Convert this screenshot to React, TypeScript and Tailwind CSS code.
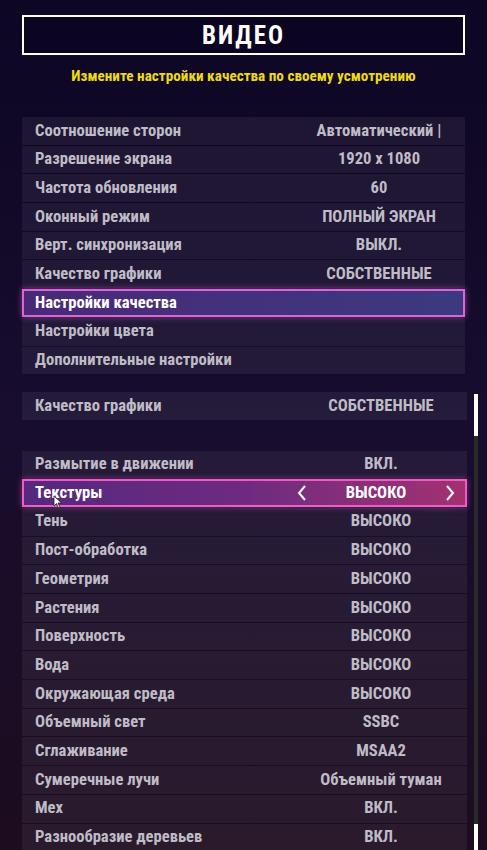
import React from 'react';

type Row = { label: string; value?: string; active?: boolean; blank?: boolean };

const topRows: Row[] = [
  { label: 'Соотношение сторон', value: 'Автоматический |' },
  { label: 'Разрешение экрана', value: '1920 x 1080' },
  { label: 'Частота обновления', value: '60' },
  { label: 'Оконный режим', value: 'ПОЛНЫЙ ЭКРАН' },
  { label: 'Верт. синхронизация', value: 'ВЫКЛ.' },
  { label: 'Качество графики', value: 'СОБСТВЕННЫЕ' },
  { label: 'Настройки качества', active: true },
  { label: 'Настройки цвета' },
  { label: 'Дополнительные настройки' },
];

const qualityRows: Row[] = [
  { label: 'Качество графики', value: 'СОБСТВЕННЫЕ' },
  { label: '', blank: true },
  { label: 'Размытие в движении', value: 'ВКЛ.' },
  { label: 'Текстуры', value: 'ВЫСОКО', active: true },
  { label: 'Тень', value: 'ВЫСОКО' },
  { label: 'Пост-обработка', value: 'ВЫСОКО' },
  { label: 'Геометрия', value: 'ВЫСОКО' },
  { label: 'Растения', value: 'ВЫСОКО' },
  { label: 'Поверхность', value: 'ВЫСОКО' },
  { label: 'Вода', value: 'ВЫСОКО' },
  { label: 'Окружающая среда', value: 'ВЫСОКО' },
  { label: 'Объемный свет', value: 'SSBC' },
  { label: 'Сглаживание', value: 'MSAA2' },
  { label: 'Сумеречные лучи', value: 'Объемный туман' },
  { label: 'Мех', value: 'ВКЛ.' },
  { label: 'Разнообразие деревьев', value: 'ВКЛ.' },
];

const Chevron: React.FC<{ dir: 'left' | 'right' }> = ({ dir }) => (
  <svg width="10" height="16" viewBox="0 0 10 16" fill="none">
    <polyline
      points={dir === 'left' ? '8,1 2,8 8,15' : '2,1 8,8 2,15'}
      stroke="white"
      strokeWidth="2"
      strokeLinejoin="miter"
    />
  </svg>
);

// mouse pointer sitting over the "Текстуры" label
const Cursor: React.FC = () => (
  <svg className="absolute left-[29px] top-[14px]" width="10" height="14" viewBox="0 0 10 14">
    <path d="M1 1 L1 11 L3.5 8.5 L5.5 13 L7 12.3 L5 8 L8.5 8 Z" fill="white" stroke="#222" strokeWidth="0.8" />
  </svg>
);

const SettingRow: React.FC<{ row: Row; variant: 'menu' | 'select'; cursor?: boolean }> = ({ row, variant, cursor }) => {
  if (row.blank) return <div className="h-[28.7px] shrink-0" />;

  if (row.active && variant === 'menu') {
    return (
      <div className="relative flex h-[27.7px] shrink-0 items-center border-2 border-[#d965d6] bg-gradient-to-r from-[#4a2878] to-[#3b3a7e] pl-[11px] text-white shadow-[0_0_6px_rgba(230,100,220,0.55)]">
        <span className="flex-1">{row.label}</span>
      </div>
    );
  }

  if (row.active) {
    return (
      <div className="relative flex h-[27.7px] shrink-0 items-center border-2 border-[#f05bc7] bg-gradient-to-r from-[#54297f] via-[#6e2a80] to-[#a33070] pl-[11px] text-white shadow-[0_0_6px_rgba(240,90,200,0.5)]">
        <span className="flex-1">{row.label}</span>
        <div className="flex w-[168px] items-center justify-between pr-[10px]">
          <Chevron dir="left" />
          <span>{row.value}</span>
          <Chevron dir="right" />
        </div>
        {cursor && <Cursor />}
      </div>
    );
  }

  return (
    <div className="flex h-[27.7px] shrink-0 items-center bg-white/[0.06] pl-[13px] pr-[5px] text-[#bfbcc6]">
      <span className="flex-1">{row.label}</span>
      {row.value !== undefined && <span className="w-[162px] whitespace-nowrap text-center">{row.value}</span>}
    </div>
  );
};

const App: React.FC = () => {
  return (
    <div className="relative h-[850px] w-[487px] overflow-hidden bg-gradient-to-b from-[#0d0624] via-[#180d2e] to-[#1d0c1f] font-['Roboto_Condensed',Roboto,sans-serif] font-bold font-stretch-condensed">
      <div className="mx-[22px] mt-[15px] flex h-[40px] items-center justify-center border-2 border-white bg-[#0c0522]">
        <h1 className="text-[25px] leading-none tracking-[2px] text-white">ВИДЕО</h1>
      </div>

      <p className="mt-[13px] text-center text-[15.2px] leading-[16px] text-[#eedb14]">
        Измените настройки качества по своему усмотрению
      </p>

      <div className="mx-[22px] mt-[33px] flex flex-col gap-px text-[16.6px] leading-none">
        {topRows.map((row) => (
          <SettingRow key={row.label} row={row} variant="menu" />
        ))}
      </div>

      <div className="mt-[18px] flex">
        <div className="ml-[22px] flex w-[445px] flex-col gap-px text-[16.6px] leading-none">
          {qualityRows.map((row, i) => (
            <SettingRow key={i} row={row} variant="select" cursor={row.label === 'Текстуры'} />
          ))}
        </div>
        <div className="ml-[7px] mt-[2px] flex h-[470px] w-[4px] flex-col bg-[#2a2a2c]">
          <div className="h-[42px] bg-white" />
          <div className="flex-1" />
          <div className="h-[40px] bg-white" />
        </div>
      </div>
    </div>
  );
};

export default App;
